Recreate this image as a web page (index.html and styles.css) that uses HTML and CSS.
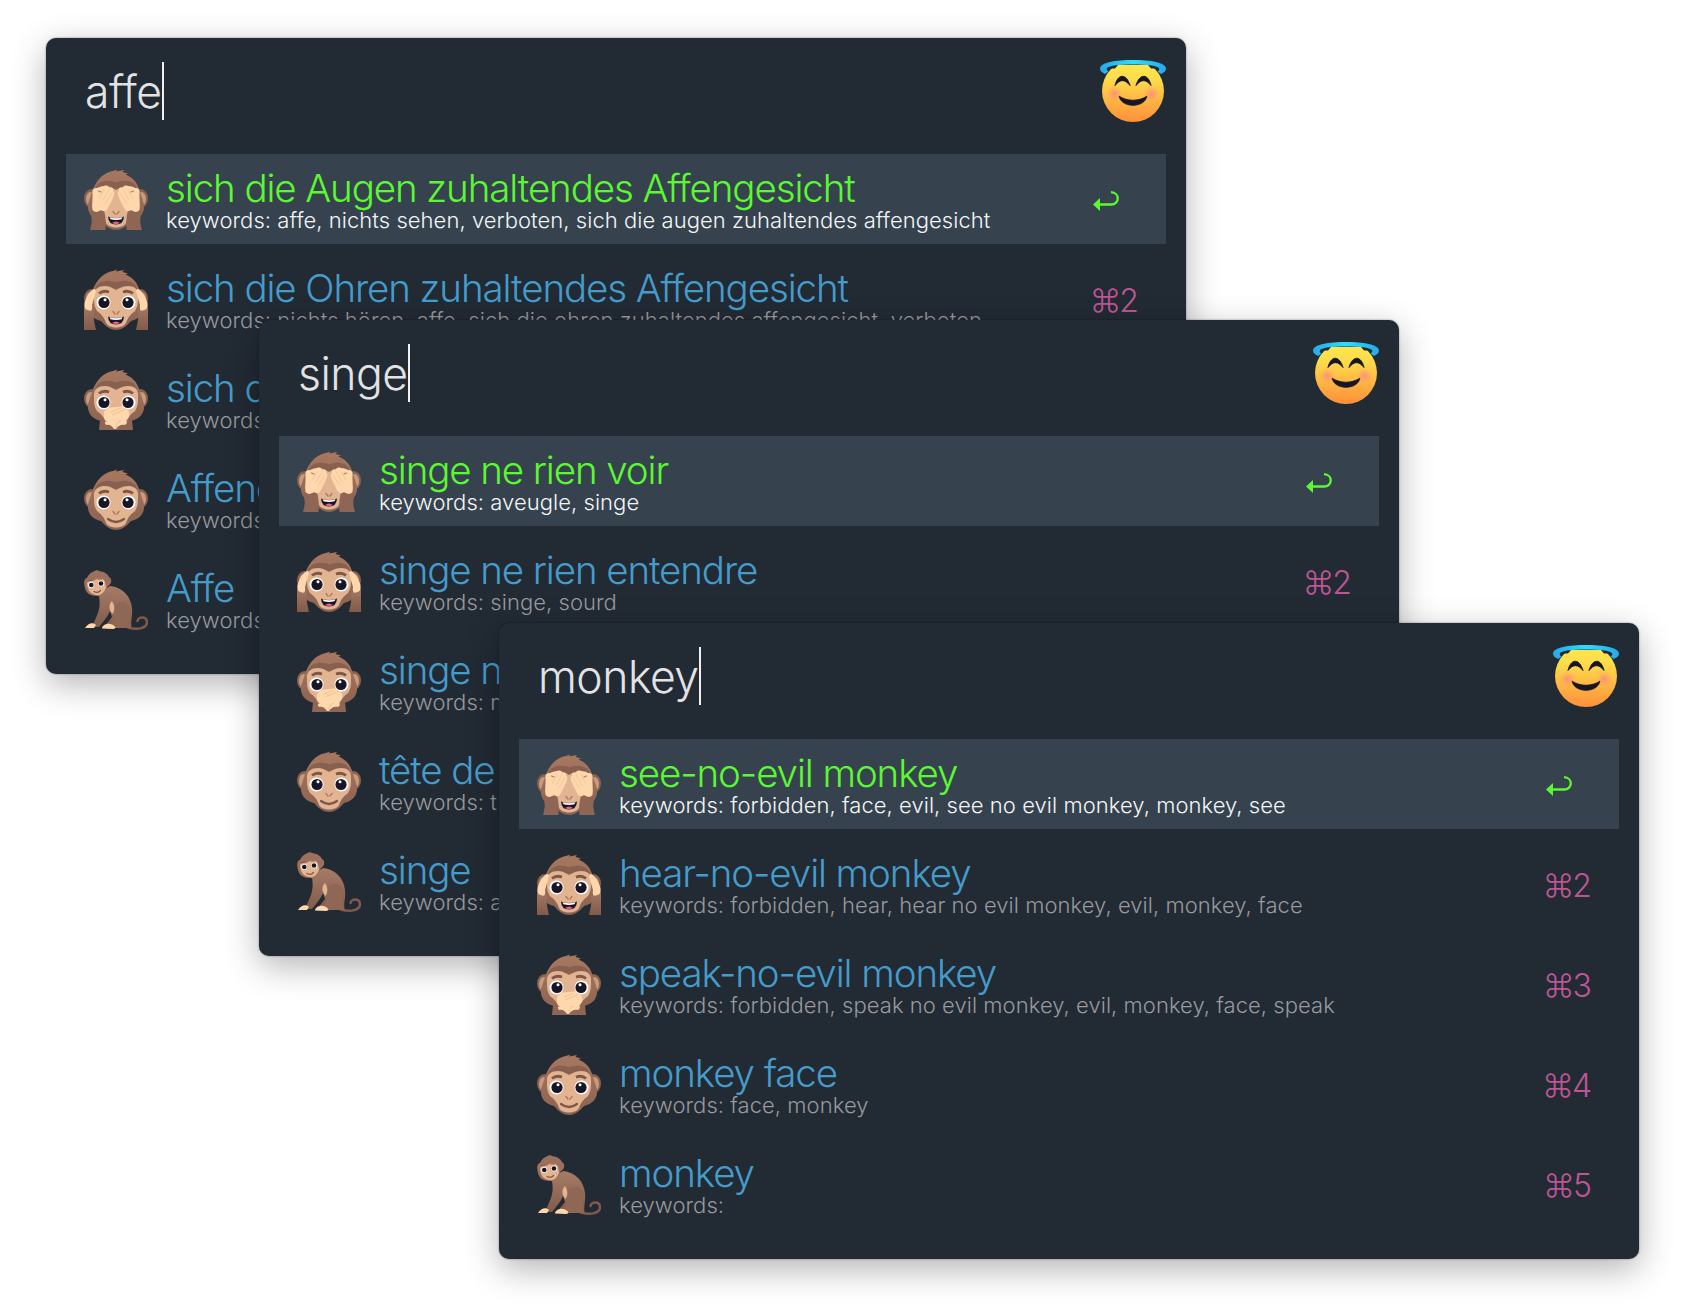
FILE: index.html
```html
<!DOCTYPE html>
<html lang="en">
<head>
<meta charset="utf-8">
<title>Emoji search</title>
<link rel="stylesheet" href="styles.css">
</head>
<body>
<svg class="defs" aria-hidden="true">
  <defs>
    <linearGradient id="fur" x1="0" y1="0" x2="0" y2="1"><stop offset="0" stop-color="#a87860"/><stop offset="1" stop-color="#8a6251"/></linearGradient>
    <linearGradient id="body" x1="0" y1="0" x2="0" y2="1"><stop offset="0" stop-color="#a67c67"/><stop offset="1" stop-color="#815a4a"/></linearGradient>
    <linearGradient id="sun" x1="0" y1="0" x2="0" y2="1"><stop offset="0" stop-color="#ffe94d"/><stop offset=".3" stop-color="#fddc4b"/><stop offset="1" stop-color="#ff8f3a"/></linearGradient>
    <linearGradient id="ring" x1="0" y1="0" x2="1" y2="0"><stop offset="0" stop-color="#27a9e8"/><stop offset=".5" stop-color="#2ddcff"/><stop offset="1" stop-color="#27a9e8"/></linearGradient>
    <radialGradient id="cheek"><stop offset="0" stop-color="#ff8b84" stop-opacity=".95"/><stop offset="1" stop-color="#ff9a6c" stop-opacity="0"/></radialGradient>

    <g id="head">
      <ellipse cx="7.500" cy="30.500" rx="7.500" ry="9.500" fill="#8a6250"/>
      <ellipse cx="56.500" cy="30.500" rx="7.500" ry="9.500" fill="#8a6250"/>
      <ellipse cx="6.500" cy="31" rx="4.500" ry="7" fill="#c89a7e"/>
      <ellipse cx="57.500" cy="31" rx="4.500" ry="7" fill="#c89a7e"/>
      <path d="M8 24C12 11 21 4 29 3L33 1.500 32 3.500 40 2 38.500 4 44 5.500 41.500 6.500C50 10 54 16 56 24L60 36C61 45 56 51 47 53C42 59 37 62 32 62S22 59 17 53C8 51 3 45 4 36Z" fill="url(#fur)"/>
      <path d="M11 21C14 11 27 12 32 14.500C38 12 50 11 53 21C44 17 37 19 32 21C27 19 20 17 11 21Z" fill="#87604f"/>
      <path d="M10 29C9 21 15 18 21 18S29 21 32 22C35 21 38 18 44 18S55 21 54 29C54 35 54 38 51 43C47 46 44 49 42 55C39 61 25 61 22 55C20 49 17 46 13 43C10 38 10 35 10 29Z" fill="#e3b491"/>
      <path d="M29 43.500L31 46M35 43.500L33 46" stroke="#b27b63" stroke-width="1.500" stroke-linecap="round"/>
    </g>
    <g id="eyes">
      <circle cx="19.500" cy="34.500" r="7" fill="#fff"/><circle cx="44.500" cy="34.500" r="7" fill="#fff"/>
      <circle cx="20" cy="34.500" r="5.600" fill="#181626"/><circle cx="44" cy="34.500" r="5.600" fill="#181626"/>
      <circle cx="21" cy="31.800" r="1.500" fill="#fff"/><circle cx="43" cy="31.800" r="1.500" fill="#fff"/>
      <path d="M15 25.500Q19 22 25 24M49 25.500Q45 22 39 24" fill="none" stroke="#7d5747" stroke-width="2.800"/>
    </g>
    <g id="grin">
      <path d="M24 48.500Q32 51.500 40 48.500Q39.500 56.500 32 56.500T24 48.500Z" fill="#181626"/>
      <path d="M25.500 49.200Q32 51.500 38.500 49.200L37.500 51.200Q32 52.800 26.500 51.200Z" fill="#fff"/>
      <path d="M28 55Q32 52 36 55Q32 57.300 28 55Z" fill="#f1588e"/>
    </g>
    <g id="palm">
      <path d="M5 43L20 42C22 50 22 56 21.500 62H6C8 55 9 50 5 43Z" fill="#8f6655"/>
      <path d="M8.500 25C8 21 10 20 13 20L20 18C23 17 25 18 25 20C28 18.500 30 20 29 23C31.500 24 30 27 28.500 31L24 40C22 44 20 44 17 42C14 44 11 45 8.500 42C7.500 37 9 31 8.500 25Z" fill="#ffd7ac"/>
      <path d="M20 21.500L15.500 30M25 21.500L19 32M28 25L21.500 35" fill="none" stroke="#efc193" stroke-width=".8" stroke-linecap="round"/>
      <path d="M14.500 23L17 24" stroke="#a97c5e" stroke-width="1.200" stroke-linecap="round"/>
    </g>

    <symbol id="see" viewBox="0 0 64 64">
      <use href="#head"/><use href="#grin"/>
      <use href="#palm"/><use href="#palm" transform="translate(64 0) scale(-1 1)"/>
    </symbol>
    <symbol id="hear" viewBox="0 0 64 64">
      <use href="#head"/><use href="#eyes"/><use href="#grin"/>
      <path d="M1 37L10 43C9 51 11 57 12 62H0V41Z" fill="url(#body)"/><path d="M63 37L54 43C55 51 53 57 52 62H64V41Z" fill="url(#body)"/>
      <path d="M11 21C7 21 2 29 .5 35C0 39 1 42 4 42C7 44 9 42 8 37L12 23Z" fill="#ffd7ac"/><path d="M53 21C57 21 62 29 63.500 35C64 39 63 42 60 42C57 44 55 42 56 37L52 23Z" fill="#ffd7ac"/>
    </symbol>
    <symbol id="speak" viewBox="0 0 64 64">
      <use href="#head"/><use href="#eyes"/>
      <path d="M16 52L24 54 32 58 40 54 48 52 49 62H15Z" fill="#8f6655"/>
      <path d="M20 47C19 43 23 40 27 39.500L37 38.500C39 37.500 41 39 40 41L44 42C46 45 46 50 42 52L43 55 41 57C37 56 34 58 32 61H30C28 57 24 56 22 57C20 54 21 53 23 54L20 50Z" fill="#ffd7ac"/>
      <path d="M27 44L37 40M28 47L40 42M32 60Q32 54 37 53" fill="none" stroke="#ecbd90" stroke-width=".9"/>
    </symbol>
    <symbol id="face" viewBox="0 0 64 64">
      <use href="#head"/><use href="#eyes"/>
      <path d="M24 51Q32 57 40 51" fill="none" stroke="#7d5747" stroke-width="2.200" stroke-linecap="round"/>
    </symbol>
    <symbol id="monkey" viewBox="0 0 64 64">
      <path d="M44 59.500C54 62.500 63 60 63 54C62.500 48 54 48.500 53.500 53" fill="none" stroke="#815a4a" stroke-width="2.500" stroke-linecap="round"/>
      <path d="M15 26L26 18C38 19 47 28 48 40C49 49 46 54 48 60H27L20 59 28 49 26 43C23 50 19 54 15 59H8L14 45C17 36 15 31 15 26Z" fill="url(#body)"/>
      <path d="M29 50C28 40 32 33 40 34C46 36 47 42 46 48L47 60H25Z" fill="#8f6755"/>
      <path d="M28 33C31 38 31 42 28.500 46C24 41 25 36 28 33Z" fill="#e3b491"/>
      <path d="M1 60C4 55 9 54 12 57L10 60ZM18 60.500C18 57 24 54 29 57Q34 60.500 29 61Z" fill="#ffd7ac"/>
      <path d="M1 20C-1 13 1 10 3 10C5 5 10 3 13 2L15 3C22 4 24 7 25 9C29 11 27 17 24 18C22 24 18 29 13 28C6 28 2 25 1 20Z" fill="#9c705c"/>
      <path d="M3 15C5 11 9 14 11 12C15 9 20 10 21 14L22 19C21 24 17 28 13 27C7 27 3 22 3 15Z" fill="#e3b491"/>
      <circle cx="7.200" cy="17" r="2.900" fill="#fff"/><circle cx="17.200" cy="15.500" r="2.900" fill="#fff"/><circle cx="7.300" cy="17" r="2.300" fill="#181626"/><circle cx="17" cy="15.500" r="2.300" fill="#181626"/>
      <path d="M10 23.500Q14 25.500 16.500 22.500M4.500 13L8 12M14 11L17.500 11" fill="none" stroke="#7d5747" stroke-width="1.200" stroke-linecap="round"/>
    </symbol>
    <symbol id="angel" viewBox="0 0 66 64">
      <circle cx="33" cy="32" r="31" fill="url(#sun)"/>
      <path d="M0 0H66V9.500H51L48 6H18L15 9.500H0Z" fill="#222a34"/>
      <path fill-rule="evenodd" d="M0 9.500C0 3.500 16 1 33 1S66 3.500 66 9.500C66 12 64 13.500 61 15L57.500 12.500Q60 11 59 9C57 6.500 46 5.500 33 5.500S9 6.500 7 9Q6 11 8.500 12.500L5 15C2 13.500 0 12 0 9.500Z" fill="url(#ring)"/>
      <circle cx="14.500" cy="35" r="8" fill="url(#cheek)"/><circle cx="51.500" cy="35" r="8" fill="url(#cheek)"/>
      <path d="M15 26.500C18 14 26.500 14.500 30 26.500C25 20 20 20 15 26.500ZM36 26.500C39.500 14.500 48 14 51 26.500C46 20 41 20 36 26.500Z" fill="#181626" stroke="#181626" stroke-width="1" stroke-linejoin="round"/>
      <path d="M19 37C27 42.500 39 42.500 47 37C45 49.500 21 49.500 19 37Z" fill="#181626" stroke="#181626" stroke-width=".6" stroke-linejoin="round"/>
    </symbol>
    <symbol id="return" viewBox="0 0 26 20">
      <path d="M18 1.200C27 1.500 27 13.500 18 13.500H6" fill="none" stroke="#5bf92f" stroke-width="2.300"/>
      <path d="M0 13.500L7 7V20Z" fill="#5bf92f"/>
    </symbol>
  </defs>
</svg>

<main class="desktop">
  <section class="window german">
    <header class="search"><span class="query">affe</span><svg class="angel"><use href="#angel"/></svg></header>
    <ul class="results">
      <li class="row selected"><svg class="icon"><use href="#see"/></svg><div class="text"><div class="title">sich die Augen zuhaltendes Affengesicht</div><div class="sub">keywords: affe, nichts sehen, verboten, sich die augen zuhaltendes affengesicht</div></div><svg class="enter"><use href="#return"/></svg></li>
      <li class="row"><svg class="icon"><use href="#hear"/></svg><div class="text"><div class="title">sich die Ohren zuhaltendes Affengesicht</div><div class="sub">keywords: nichts hören, affe, sich die ohren zuhaltendes affengesicht, verboten</div></div><kbd class="key">⌘2</kbd></li>
      <li class="row"><svg class="icon"><use href="#speak"/></svg><div class="text"><div class="title">sich d</div><div class="sub">keywords:</div></div></li>
      <li class="row"><svg class="icon"><use href="#face"/></svg><div class="text"><div class="title">Affeng</div><div class="sub">keywords:</div></div></li>
      <li class="row"><svg class="icon"><use href="#monkey"/></svg><div class="text"><div class="title">Affe</div><div class="sub">keywords:</div></div></li>
    </ul>
  </section>

  <section class="window french">
    <header class="search"><span class="query">singe</span><svg class="angel"><use href="#angel"/></svg></header>
    <ul class="results">
      <li class="row selected"><svg class="icon"><use href="#see"/></svg><div class="text"><div class="title">singe ne rien voir</div><div class="sub">keywords: aveugle, singe</div></div><svg class="enter"><use href="#return"/></svg></li>
      <li class="row"><svg class="icon"><use href="#hear"/></svg><div class="text"><div class="title">singe ne rien entendre</div><div class="sub">keywords: singe, sourd</div></div><kbd class="key">⌘2</kbd></li>
      <li class="row"><svg class="icon"><use href="#speak"/></svg><div class="text"><div class="title">singe n</div><div class="sub">keywords: m</div></div></li>
      <li class="row"><svg class="icon"><use href="#face"/></svg><div class="text"><div class="title">tête de</div><div class="sub">keywords: t</div></div></li>
      <li class="row"><svg class="icon"><use href="#monkey"/></svg><div class="text"><div class="title">singe</div><div class="sub">keywords: a</div></div></li>
    </ul>
  </section>

  <section class="window english">
    <header class="search"><span class="query">monkey</span><svg class="angel"><use href="#angel"/></svg></header>
    <ul class="results">
      <li class="row selected"><svg class="icon"><use href="#see"/></svg><div class="text"><div class="title">see-no-evil monkey</div><div class="sub">keywords: forbidden, face, evil, see no evil monkey, monkey, see</div></div><svg class="enter"><use href="#return"/></svg></li>
      <li class="row"><svg class="icon"><use href="#hear"/></svg><div class="text"><div class="title">hear-no-evil monkey</div><div class="sub">keywords: forbidden, hear, hear no evil monkey, evil, monkey, face</div></div><kbd class="key">⌘2</kbd></li>
      <li class="row"><svg class="icon"><use href="#speak"/></svg><div class="text"><div class="title">speak-no-evil monkey</div><div class="sub">keywords: forbidden, speak no evil monkey, evil, monkey, face, speak</div></div><kbd class="key">⌘3</kbd></li>
      <li class="row"><svg class="icon"><use href="#face"/></svg><div class="text"><div class="title">monkey face</div><div class="sub">keywords: face, monkey</div></div><kbd class="key">⌘4</kbd></li>
      <li class="row"><svg class="icon"><use href="#monkey"/></svg><div class="text"><div class="title">monkey</div><div class="sub">keywords:</div></div><kbd class="key">⌘5</kbd></li>
    </ul>
  </section>
</main>
</body>
</html>
```

FILE: styles.css
```css
* { box-sizing: border-box; }
body { margin: 0; background: #fff; font-family: Inter, "Liberation Sans", sans-serif; font-weight: 300; font-variant-ligatures: none; }
.defs { position: absolute; width: 0; height: 0; }
.desktop { position: relative; width: 1685px; height: 1313px; overflow: hidden; }

.window {
  position: absolute;
  width: 1140px;
  height: 636px;
  padding: 0 20px;
  border-radius: 10px;
  background: #222a34;
  box-shadow: 0 0 2px rgba(0, 0, 0, .45), 0 10px 34px rgba(0, 0, 0, .3);
}
.german { left: 46px; top: 38px; }
.french { left: 259px; top: 320px; }
.english { left: 499px; top: 623px; }

.search { display: flex; height: 116px; padding: 24px 0 0 19px; justify-content: space-between; align-items: flex-start; }
.query { height: 58px; line-height: 60px; font-size: 44.5px; letter-spacing: -.5px; color: #e2e3e5; border-right: 2px solid #f0f0f0; }
.angel { width: 66px; height: 64px; margin-top: -3px; }

.results { display: flex; flex-direction: column; gap: 10px; margin: 0; padding: 0; list-style: none; }
.row { display: flex; align-items: center; height: 90px; padding: 0 47px 0 18px; color: #97999c; }
.selected { background: #36434f; color: #f2f5f7; }
.icon { flex: none; width: 64px; height: 64px; margin-top: 2px; }
.text { flex: 1; margin-left: 18px; padding-top: 7px; white-space: nowrap; }
.title { height: 35px; line-height: 34px; font-size: 38.5px; letter-spacing: -1.1px; color: #459ccb; }
.selected .title { color: #5bf92f; }
.sub { height: 28px; line-height: 28px; font-size: 22px; letter-spacing: .05px; }
.enter { width: 26px; height: 20px; margin-top: 4px; }
.key { font: 300 32px Inter, "DejaVu Sans", sans-serif; letter-spacing: -2px; color: #bd5694; margin: 2px -18px 0 0; }
```
